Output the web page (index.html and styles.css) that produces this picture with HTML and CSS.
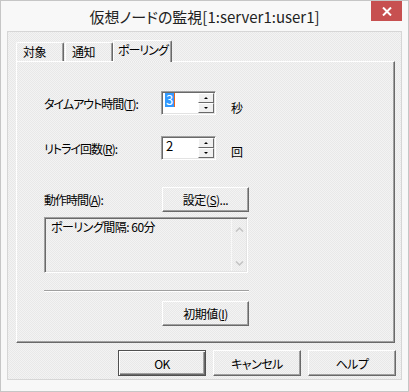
FILE: index.html
```html
<!DOCTYPE html>
<html lang="ja">
<head>
    <meta charset="UTF-8">
    <title>仮想ノードの監視</title>
    <link rel="stylesheet" href="styles.css">
</head>
<body>

<div class="window">
    <div class="titlebar">
        <span></span>
        <div class="title">仮想ノードの監視[1:server1:user1]</div>
        <div class="close">
            <svg width="10" height="9" viewBox="0 0 10 9">
                <path d="M1 0.5 L9 8.5 M9 0.5 L1 8.5" stroke="#fff" stroke-width="2"/>
            </svg>
        </div>
    </div>

    <div class="client">
        <div class="tabs">
            <div class="tab tab-first">対象</div>
            <div class="tab tab-second">通知</div>
            <div class="tab active">ポーリング</div>
        </div>

        <div class="panel">
            <div class="field-row">
                <span class="lbl">タイムアウト時間(<u>T</u>):</span>
                <div class="spin">
                    <div class="spin-value"><span class="sel">3</span><span class="caret"></span></div>
                    <div class="spin-btns">
                        <div class="spin-btn"><span class="arrow-up"></span></div>
                        <div class="spin-btn"><span class="arrow-down"></span></div>
                    </div>
                </div>
                <span class="unit unit-sec">秒</span>
            </div>

            <div class="field-row row-retry">
                <span class="lbl">リトライ回数(<u>R</u>):</span>
                <div class="spin">
                    <div class="spin-value"><span class="plain">2</span></div>
                    <div class="spin-btns">
                        <div class="spin-btn"><span class="arrow-up"></span></div>
                        <div class="spin-btn"><span class="arrow-down"></span></div>
                    </div>
                </div>
                <span class="unit unit-count">回</span>
            </div>

            <div class="field-row row-period">
                <span class="lbl">動作時間(<u>A</u>):</span>
                <button type="button" class="btn btn-set">設定(<u>S</u>)...</button>
            </div>

            <div class="memo">
                <div class="memo-text">ポーリング間隔: 60分</div>
                <div class="memo-scroll">
                    <svg width="9" height="5" viewBox="0 0 9 5"><path d="M1 4.5 L4.5 1 L8 4.5" fill="none" stroke="#c4c4c4" stroke-width="1.5"/></svg>
                    <svg width="9" height="5" viewBox="0 0 9 5"><path d="M1 0.5 L4.5 4 L8 0.5" fill="none" stroke="#c4c4c4" stroke-width="1.5"/></svg>
                </div>
            </div>

            <div class="separator"></div>

            <button type="button" class="btn btn-init">初期値(<u>I</u>)</button>
        </div>

        <div class="actions">
            <button type="button" class="btn btn-dialog btn-default">OK</button>
            <button type="button" class="btn btn-dialog">キャンセル</button>
            <button type="button" class="btn btn-dialog">ヘルプ</button>
        </div>
    </div>
</div>

</body>
</html>
```

FILE: styles.css
```css
* {
    box-sizing: border-box;
}

body {
    margin: 0;
    background-color: #fff;
    color: #000;
    font-family: "Noto Sans CJK JP", "Noto Sans", sans-serif;
    font-size: 12px;
    font-feature-settings: "palt";
    letter-spacing: -0.5px;
}

/* ventana */
.window {
    width: 409px;
    height: 392px;
    border: 1px solid #c6c6c6;
    background-color: #f8f8f8;
    display: flex;
    flex-direction: column;
}

.titlebar {
    height: 30px;
    display: grid;
    grid-template-columns: 1fr auto 1fr;
    align-items: start;
}

.title {
    font-size: 15px;
    line-height: 20px;
    letter-spacing: 0;
    padding-top: 6px;
    color: #222;
    white-space: nowrap;
}

.close {
    justify-self: end;
    width: 31px;
    height: 20px;
    margin-right: 6px;
    background-color: #c75050;
    display: flex;
    align-items: center;
    justify-content: center;
}

.client {
    margin: 0 6px;
    height: 349px;
    border: 1px solid #d6d6d6;
    padding: 8px 5px 0 8px;
    background: repeating-conic-gradient(#f3f3f3 0 25%, #e8e8e8 0 50%) 0 0 / 2px 2px;
}

/* pestañas */
.tabs {
    display: flex;
    align-items: flex-end;
    height: 21px;
}

.tab {
    height: 19px;
    line-height: 17px;
    white-space: nowrap;
    border: 1px solid;
    border-color: #fff #696969 transparent #fff;
    border-bottom: none;
    box-shadow: inset -1px 0 #a0a0a0;
    border-radius: 2px 2px 0 0;
    padding-left: 6px;
}

.tab-first {
    width: 48px;
}

.tab-second {
    width: 48px;
    margin-left: 1px;
}

.tab.active {
    width: 59px;
    height: 22px;
    line-height: 17px;
    margin-bottom: -1px;
    padding-left: 4px;
    letter-spacing: -1px;
    position: relative;
    z-index: 1;
    background: repeating-conic-gradient(#f3f3f3 0 25%, #e8e8e8 0 50%) 0 0 / 2px 2px;
}

.panel {
    height: 282px;
    margin-right: 1px;
    border: 1px solid;
    border-color: #fff #696969 #696969 #fff;
    box-shadow: inset -1px -1px #a0a0a0;
    padding: 29px 0 0 27px;
}

.field-row {
    display: flex;
    align-items: center;
    height: 24px;
}

.row-retry {
    margin-top: 21px;
}

.row-period {
    margin-top: 27px;
    height: 25px;
}

.lbl {
    width: 117px;
    white-space: nowrap;
    letter-spacing: -1px;
}

/* campo numérico */
.spin {
    width: 55px;
    height: 24px;
    display: flex;
    background-color: #fff;
    border: 1px solid;
    border-color: #a0a0a0 #fff #fff #a0a0a0;
    box-shadow: inset 1px 1px #696969, inset -1px -1px #e3e3e3;
    padding: 1px 1px 1px 2px;
}

.spin-value {
    flex: 1;
    display: flex;
    align-items: flex-start;
    padding-left: 1px;
    line-height: 14px;
    font-size: 13px;
}

.sel {
    background-color: #3399ff;
    color: #fff;
    padding: 0 1px;
}

.plain {
    padding: 1px 1px 0;
}

.caret {
    width: 1px;
    height: 14px;
    background-color: #e8641c;
}

.spin-btns {
    width: 16px;
    display: flex;
    flex-direction: column;
}

.spin-btn {
    height: 10px;
    display: flex;
    align-items: center;
    justify-content: center;
    border: 1px solid;
    border-color: #fff #696969 #696969 #fff;
    background-color: #f0f0f0;
}

.arrow-up {
    border-left: 2px solid transparent;
    border-right: 2px solid transparent;
    border-bottom: 2px solid #000;
}

.arrow-down {
    border-left: 2px solid transparent;
    border-right: 2px solid transparent;
    border-top: 2px solid #000;
}

.unit {
    margin-left: 15px;
}

.unit-sec {
    align-self: flex-end;
    line-height: 14px;
}

.unit-count {
    margin-top: 6px;
}

/* botones */
.btn {
    font-family: inherit;
    font-size: 12px;
    font-feature-settings: "palt";
    letter-spacing: -0.5px;
    color: #000;
    padding: 0;
    border: 1px solid;
    border-color: #fff #696969 #696969 #fff;
    box-shadow: inset -1px -1px #a0a0a0;
    background: repeating-conic-gradient(#f3f3f3 0 25%, #e8e8e8 0 50%) 0 0 / 2px 2px;
}

.btn-set {
    width: 87px;
    height: 25px;
    margin-left: 1px;
}

.btn-init {
    display: block;
    width: 87px;
    height: 25px;
    margin: 9px 0 0 118px;
}

.memo {
    width: 204px;
    height: 56px;
    margin-top: 5px;
    display: flex;
    border: 1px solid;
    border-color: #a0a0a0 #fff #fff #a0a0a0;
    box-shadow: inset 1px 1px #696969, inset -1px -1px #e3e3e3;
    padding: 1px;
}

.memo-text {
    flex: 1;
    padding: 1px 0 0 5px;
    line-height: 14px;
}

.memo-scroll {
    width: 15px;
    border-left: 1px solid #f8f8f8;
    display: flex;
    flex-direction: column;
    align-items: center;
    justify-content: space-between;
    padding: 8px 0 5px;
}

.separator {
    width: 205px;
    margin-top: 17px;
    border-top: 1px solid #a0a0a0;
    border-bottom: 1px solid #fff;
}

.actions {
    display: flex;
    justify-content: flex-end;
    gap: 7px;
    margin-top: 7px;
}

.btn-dialog {
    width: 88px;
    height: 26px;
}

.btn-default {
    border: 1px solid #505050;
    box-shadow: inset 1px 1px #fff, inset -1px -1px #696969, inset -2px -2px #a0a0a0;
}
```
